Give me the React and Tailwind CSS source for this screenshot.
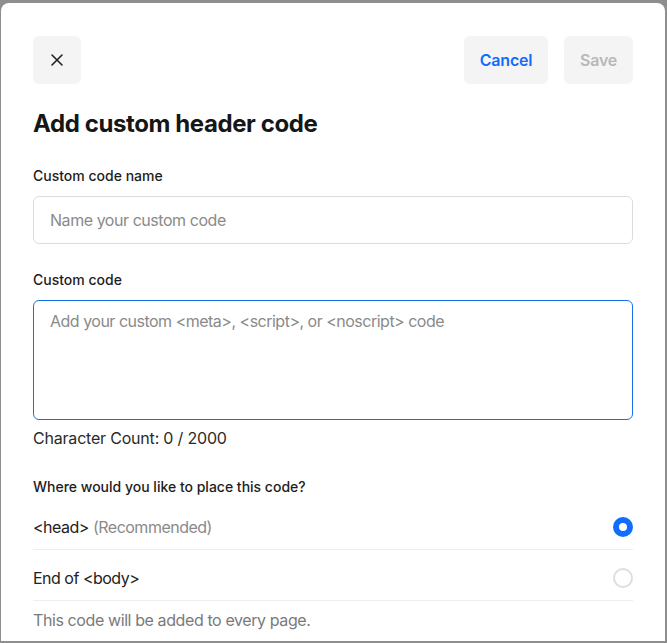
import React, { useState } from 'react'

const App = () => {
    const [name, setName] = useState('')
    const [code, setCode] = useState('')
    const [place, setPlace] = useState('head')

    return (
        <div className='h-[643px] w-[667px] bg-[#8e8e8e] pt-[3px] pl-[1px] pr-[2px] pb-[2px] font-["Inter",sans-serif]'>
            <div className='h-full bg-white rounded-t-[8px] px-8 pt-[33px] overflow-hidden'>
                <div className='flex items-center justify-between'>
                    <button className='w-12 h-12 rounded-[6px] bg-[#f4f4f4] flex items-center justify-center text-[#222]'>
                        <svg width="14" height="14" viewBox="0 0 14 14" fill="none" stroke="currentColor" strokeWidth="1.6" strokeLinecap="round">
                            <path d="M2 2 L12 12 M12 2 L2 12" />
                        </svg>
                    </button>
                    <div className='flex items-center gap-4'>
                        <button className='h-12 w-[84px] rounded-[6px] bg-[#f4f4f4] text-[#116dff] text-base font-semibold tracking-[-0.2px]'>Cancel</button>
                        <button className='h-12 w-[69px] rounded-[6px] bg-[#f4f4f4] text-[#b8b8b8] text-base font-semibold tracking-[-0.2px]'>Save</button>
                    </div>
                </div>

                <h1 className='mt-[24px] text-2xl leading-8 font-bold text-[#161616] tracking-[-0.4px]'>Add custom header code</h1>

                <p className='mt-[26px] text-sm leading-5 font-medium text-[#1d1d1d]'>Custom code name</p>
                <input
                    value={name}
                    onChange={e => setName(e.target.value)}
                    placeholder='Name your custom code'
                    className='mt-[10px] w-full h-12 px-4 rounded-[6px] border border-[#dcdcdc] text-base tracking-[-0.45px] text-[#222] placeholder:text-[#8a8a8a] outline-none'
                />

                <p className='mt-[26px] text-sm leading-5 font-medium text-[#1d1d1d]'>Custom code</p>
                <textarea
                    value={code}
                    onChange={e => setCode(e.target.value)}
                    placeholder='Add your custom <meta>, <script>, or <noscript> code'
                    className='mt-[10px] block w-full h-[120px] px-4 py-[8px] rounded-[6px] border border-[#1a6fe8] text-base leading-6 tracking-[-0.5px] text-[#222] placeholder:text-[#8a8a8a] outline-none resize-none'
                />
                <p className='mt-[6px] text-base leading-6 tracking-[-0.2px] text-[#2a2a2a]'>Character Count: {code.length} / 2000</p>

                <p className='mt-[27px] text-sm leading-5 font-medium text-[#1d1d1d]'>Where would you like to place this code?</p>

                {/* placement options */}
                <div className='mt-px flex flex-col'>
                    <label className='flex items-center justify-between h-[52px] pt-[6px] border-b border-[#eeeeee] cursor-pointer' onClick={() => setPlace('head')}>
                        <span className='text-base tracking-[-0.5px] text-[#222]'>&lt;head&gt; <span className='text-[#8a8a8a]'>(Recommended)</span></span>
                        {place === 'head'
                            ? <span className='w-5 h-5 rounded-full border-[6px] border-[#116dff] bg-white'></span>
                            : <span className='w-5 h-5 rounded-full border-2 border-[#dedede] bg-white'></span>}
                    </label>
                    <label className='flex items-center justify-between h-[51px] pt-[6px] border-b border-[#eeeeee] cursor-pointer' onClick={() => setPlace('body')}>
                        <span className='text-base tracking-[-0.5px] text-[#222]'>End of &lt;body&gt;</span>
                        {place === 'body'
                            ? <span className='w-5 h-5 rounded-full border-[6px] border-[#116dff] bg-white'></span>
                            : <span className='w-5 h-5 rounded-full border-2 border-[#dedede] bg-white'></span>}
                    </label>
                </div>

                <p className='mt-[7px] text-base leading-6 tracking-[-0.4px] text-[#7a7a7a]'>This code will be added to every page.</p>
            </div>
        </div>
    )
}

export default App
